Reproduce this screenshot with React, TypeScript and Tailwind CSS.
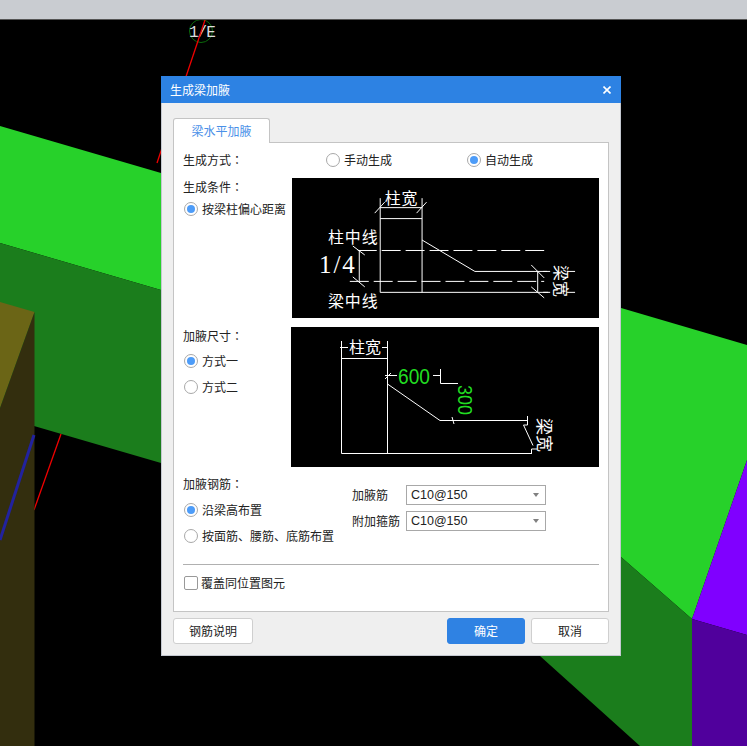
const cad = "font-['Noto_Sans_CJK_SC',sans-serif] fill-white";

const Colon = () => <span className="font-['Noto_Sans_CJK_TC',sans-serif]">：</span>;

const Radio = ({ label, checked = false, className = "" }: { label: string; checked?: boolean; className?: string }) => (
  <div className={`flex h-5 items-center gap-1 pl-px ${className}`}>
    <span className="flex h-[14px] w-[14px] shrink-0 items-center justify-center rounded-full border border-[#a8a8a8] bg-white">
      {checked && <span className="h-2 w-2 rounded-full bg-[#4d9cf8]" />}
    </span>
    <span className="whitespace-nowrap">{label}</span>
  </div>
);

const Select = ({ value }: { value: string }) => (
  <div className="flex h-5 w-[140px] items-center justify-between border border-[#a8a8a8] bg-white pl-1 pr-[6px] font-['Liberation_Sans',sans-serif] text-[12.5px]">
    <span>{value}</span>
    <span className="h-0 w-0 border-x-[3px] border-t-[4px] border-x-transparent border-t-[#808080]" />
  </div>
);

const Button = ({ label, primary = false, className = "" }: { label: string; primary?: boolean; className?: string }) => (
  <button
    className={`h-[26px] rounded-[3px] border text-xs ${
      primary ? "border-[#2f82e3] bg-[#2f82e3] text-white" : "border-[#cfcfcf] bg-white text-[#222]"
    } ${className}`}
  >
    {label}
  </button>
);

// drawing canvas behind the dialog
const Scene = () => (
  <svg viewBox="0 20 747 726" className="block h-[726px] w-[747px]">
    <polygon points="0,126 161,173 747,345 747,460 692,619 621,557 161,290 0,243" fill="#27d12a" />
    <polygon points="0,243 161,290 621,557 692,619 692,746 640,746 540,656 161,463 34,426 0,416" fill="#1b7d1c" />
    <polygon points="692,619 747,460 747,635" fill="#8000ff" />
    <polygon points="692,619 747,635 747,746 692,746" fill="#50009c" />
    <line x1="61" y1="434" x2="34" y2="510" stroke="#f00000" strokeWidth="1.3" />
    <circle cx="201" cy="31" r="11.5" fill="none" stroke="#0a6a0a" />
    <text x="189" y="37" className="fill-[#dddddd] font-['Liberation_Mono',monospace] text-[16px]" letterSpacing="-1">
      1/E
    </text>
    <line x1="205" y1="20" x2="157" y2="163" stroke="#f00000" strokeWidth="1.3" />
    <polygon points="0,302 34.5,312 0,408" fill="#6b6516" />
    <polygon points="34.5,312 34.5,746 0,746 0,408" fill="#332e0e" />
    <line x1="34" y1="435" x2="0" y2="540" stroke="#22229e" strokeWidth="3" />
  </svg>
);

const DiagramOne = () => (
  <svg viewBox="0 0 308 140" className="block h-[140px] w-[308px] bg-black">
    <g stroke="#fff" fill="none">
      <path d="M88.5 20V114.5M130.5 20V114.5M88.5 29.5H130.5M88.5 40.5H130.5M88.5 114.5H257" />
      <path d="M83 35L93 24M125 35L135 24" />
      <path d="M130.5 62L183.5 93.5H256" />
      <path d="M66 72.5H253M58 103.5H253" strokeDasharray="19 5" />
      <path d="M67.5 72V103M61 68L73 77M61 99L73 109" />
      <path d="M246.5 93V114M240 87L253 100M240 109L253 120M252 93.5H259M252 114.5H259M276 93.5H284M276 114.5H284" />
    </g>
    <text x="93" y="26" className={`${cad} text-[16px]`} letterSpacing="1">柱宽</text>
    <text x="36" y="65" className={`${cad} text-[16px]`} letterSpacing="1">柱中线</text>
    <text x="36" y="129" className={`${cad} text-[16px]`} letterSpacing="1">梁中线</text>
    <text x="27" y="95" textLength="36" className="fill-white font-['Liberation_Serif',serif] text-[25px]">1/4</text>
    <text transform="translate(264 87) rotate(90)" className={`${cad} text-[16px]`} x="0" y="0">梁宽</text>
  </svg>
);

const DiagramTwo = () => (
  <svg viewBox="0 0 308 140" className="block h-[140px] w-[308px] bg-black">
    <g stroke="#fff" fill="none">
      <path d="M50.5 14V126.5M96.5 14V126.5M50.5 31.5H96.5M50.5 126.5H241" />
      <path d="M49 20.5H57M91 20.5H97" />
      <path d="M94 48.5H106M142 48.5H149M149.5 42V56.5H167" />
      <path d="M96.5 57L149 93.5H236.5M236.5 89V98H232.5L242 118.5M240.5 126.5V122H246" />
      <path d="M161 90L163 97M94 52L100 46" />
    </g>
    <text x="58" y="26" className={`${cad} text-[16px]`}>柱宽</text>
    <text x="107" y="57" textLength="32" lengthAdjust="spacingAndGlyphs" className="fill-[#22dd22] font-['Liberation_Sans',sans-serif] text-[22px]">600</text>
    <text transform="translate(167 58) rotate(90)" textLength="30" lengthAdjust="spacingAndGlyphs" className="fill-[#22dd22] font-['Liberation_Sans',sans-serif] text-[20px]" x="0" y="0">300</text>
    <text transform="translate(247 91) rotate(90)" className={`${cad} text-[17px]`} x="0" y="0">梁宽</text>
  </svg>
);

export default function App() {
  return (
    <div className="relative h-[746px] w-[747px] overflow-hidden bg-black font-['Noto_Sans_CJK_SC',sans-serif] text-xs text-[#222]">
      <div className="h-5 border-b border-[#555] bg-[#c9ccd1]" />
      <Scene />

      {/* Dialog */}
      <div className="absolute left-[161px] top-[76px] flex h-[580px] w-[460px] flex-col">
        <div className="flex h-[27px] shrink-0 items-center justify-between bg-[#2d82e3] pl-[9px] pr-[10px] text-white">
          <span>生成梁加腋</span>
          <svg viewBox="0 0 8 8" className="h-2 w-2" stroke="#fff" strokeWidth="1.6">
            <path d="M0.5 0.5L7.5 7.5M7.5 0.5L0.5 7.5" />
          </svg>
        </div>

        <div className="flex flex-1 flex-col border-x border-b border-[#c4c8d0] bg-[#efefef] px-[11px] pt-[15px]">
          {/* Tab */}
          <div className="relative z-10 -mb-px flex h-[25px] w-[97px] items-center justify-center rounded-t-[3px] border border-b-0 border-[#c4c4c4] bg-white text-[#4a90e8]">
            梁水平加腋
          </div>

          {/* Panel */}
          <div className="flex h-[470px] flex-col border border-[#c4c4c4] bg-white pl-[9px] pr-[9px] pt-[7px]">
            <div className="flex h-5 items-center">
              <span className="w-[142px]">生成方式<Colon /></span>
              <Radio label="手动生成" className="w-[141px]" />
              <Radio label="自动生成" checked />
            </div>

            <div className="mt-2 flex">
              <div className="w-[109px] shrink-0">
                <div className="h-[18px] leading-[18px]">生成条件<Colon /></div>
                <Radio label="按梁柱偏心距离" checked className="mt-[3px]" />
              </div>
              <DiagramOne />
            </div>

            <div className="mt-[9px] flex">
              <div className="w-[108px] shrink-0">
                <div className="h-[18px] leading-[18px]">加腋尺寸<Colon /></div>
                <Radio label="方式一" checked className="mt-[6px]" />
                <Radio label="方式二" className="mt-[6px]" />
              </div>
              <DiagramTwo />
            </div>

            <div className="mt-2 flex">
              <div className="w-[169px] shrink-0">
                <div className="h-[18px] leading-[18px]">加腋钢筋<Colon /></div>
                <Radio label="沿梁高布置" checked className="mt-[7px]" />
                <Radio label="按面筋、腰筋、底筋布置" className="mt-[6px]" />
              </div>
              <div className="mt-[10px] flex flex-col gap-[6px]">
                <div className="flex items-center">
                  <span className="w-[54px]">加腋筋</span>
                  <Select value="C10@150" />
                </div>
                <div className="flex items-center">
                  <span className="w-[54px]">附加箍筋</span>
                  <Select value="C10@150" />
                </div>
              </div>
            </div>

            <div className="mt-[18px] h-px bg-[#b0b0b0]" />

            <div className="mt-[10px] flex items-center gap-[3px] pl-px">
              <span className="h-[14px] w-[14px] rounded-[2px] border border-[#999] bg-white" />
              <span>覆盖同位置图元</span>
            </div>
          </div>

          {/* Footer */}
          <div className="mt-[6px] flex items-center">
            <Button label="钢筋说明" className="w-20" />
            <Button label="确定" primary className="ml-auto w-[78px]" />
            <Button label="取消" className="ml-[6px] w-[78px]" />
          </div>
        </div>
      </div>
    </div>
  );
}
